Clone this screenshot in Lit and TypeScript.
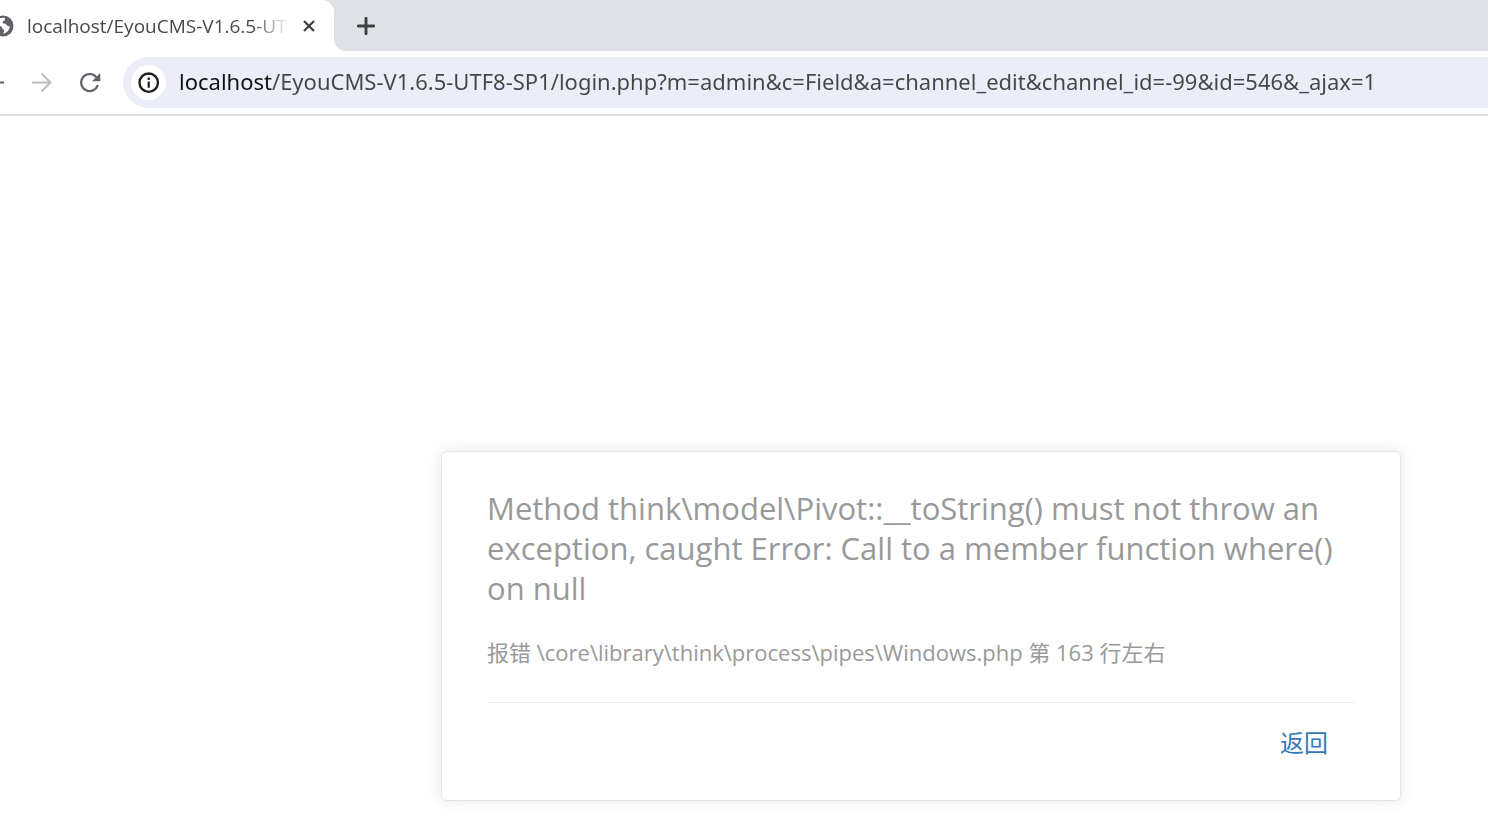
import { LitElement, html, css } from "lit";
import { customElement, property } from "lit/decorators.js";

@customElement("browser-tabs")
class BrowserTabs extends LitElement {
  @property() title = "";

  static styles = css`
    :host {
      display: flex;
      height: 51px;
      background: #dee1e6;
      font-family: "Open Sans", "Noto Sans CJK SC", sans-serif;
    }
    button {
      display: grid;
      place-items: center;
      padding: 0;
      border: 0;
      background: none;
    }
    svg {
      display: block;
    }
    .tab-bed {
      background: #fff;
      border-radius: 0 12px 0 0;
    }
    .tab {
      display: flex;
      align-items: center;
      width: 334px;
      height: 51px;
    }
    .globe {
      flex: none;
      margin-left: -8px;
    }
    .title {
      flex: none;
      width: 264px;
      margin-left: 13px;
      overflow: hidden;
      white-space: nowrap;
      font-size: 19px;
      line-height: 26px;
      color: #45494d;
      mask-image: linear-gradient(to right, #000 226px, transparent 262px);
    }
    .close {
      width: 24px;
      height: 24px;
      margin-left: 6px;
    }
    .strip {
      flex: 1;
      display: flex;
      background: linear-gradient(#dee1e6 50%, #fff 50%);
    }
    .rest {
      flex: 1;
      display: flex;
      align-items: center;
      background: #dee1e6;
      border-bottom-left-radius: 12px;
    }
    .add {
      width: 32px;
      height: 32px;
      margin-left: 16px;
    }
  `;

  render() {
    return html`
      <div class="tab-bed">
        <div class="tab">
          <svg class="globe" width="22" height="22" viewBox="0 0 22 22" aria-hidden="true">
            <circle cx="11" cy="11" r="10.5" fill="#5f6368" />
            <path
              d="M12.800 2.800C13.300 4.800 12.600 5.600 11.300 6.200c-1 .5-.4 1.400-.5 2.300 1.900-.3 3.500.2 4 1.700.4 1.100 1.800.8 3 1.300-.3 2.900-2.600 6.500-6.300 7-.3-1.300.9-2.100.6-3.200-.3-1-1.700-1-1.900-2.200-.2-1.100-1.200-1.900-2.400-2.100L3.500 10C3.500 5.500 7.500 1.800 12.800 2.800z"
              fill="#fff"
            />
          </svg>
          <span class="title">${this.title}</span>
          <button class="close" aria-label="Close tab">
            <svg width="12" height="12" viewBox="0 0 12 12">
              <path d="M1 1l10 10M11 1L1 11" stroke="#3c4043" stroke-width="2.200" />
            </svg>
          </button>
        </div>
      </div>
      <div class="strip">
        <div class="rest">
          <button class="add" aria-label="New tab">
            <svg width="18" height="18" viewBox="0 0 18 18">
              <path d="M9 1.300v15.400M1.300 9h15.400" stroke="#3c4043" stroke-width="2.900" stroke-linecap="round" />
            </svg>
          </button>
        </div>
      </div>
    `;
  }
}

@customElement("browser-toolbar")
class BrowserToolbar extends LitElement {
  @property() url = "";

  static styles = css`
    :host {
      display: flex;
      align-items: center;
      height: 63px;
      border-bottom: 2px solid #dcdcdc;
      background: #fff;
      overflow: hidden;
    }
    button {
      flex: none;
      display: grid;
      place-items: center;
      width: 32px;
      height: 32px;
      padding: 0;
      border: 0;
      background: none;
      border-radius: 50%;
    }
    svg {
      display: block;
    }
    .back {
      margin-left: -22px;
      color: #5f6368;
    }
    .forward {
      margin-left: 16px;
      color: #bdbdbd;
    }
    .reload {
      margin-left: 16px;
      color: #5f6368;
    }
    .omnibox {
      flex: 1;
      display: flex;
      align-items: center;
      height: 51px;
      margin-left: 17px;
      padding-left: 8px;
      background: #ebeef8;
      border-radius: 26px 0 0 26px;
    }
    .info {
      width: 35px;
      height: 35px;
      background: #fff;
    }
    .url {
      flex: 1;
      min-width: 0;
      height: 40px;
      margin-left: 13px;
      padding: 0 0 3px;
      border: 0;
      outline: 0;
      font: 22px "Noto Sans", "Noto Sans CJK SC", sans-serif;
      color: #454746;
      background: linear-gradient(to right, #111 93px, #454746 93px);
      background-clip: text;
      -webkit-text-fill-color: transparent;
    }
  `;

  render() {
    return html`
      <button class="back" aria-label="Back">
        <svg width="20" height="20" viewBox="0 0 20 20">
          <path d="M20 9.500H2M10 1L1.500 9.500 10 18" fill="none" stroke="currentColor" stroke-width="2" />
        </svg>
      </button>
      <button class="forward" aria-label="Forward">
        <svg width="20" height="20" viewBox="0 0 20 20">
          <path d="M0 9.500h18M9.500 .5l9 9-9 9" fill="none" stroke="currentColor" stroke-width="2" />
        </svg>
      </button>
      <button class="reload" aria-label="Reload">
        <svg width="22" height="20" viewBox="0 0 22 20">
          <path
            d="M17.300 4.200A8.500 8.500 0 1 0 18.800 12"
            fill="none"
            stroke="currentColor"
            stroke-width="2.200"
          />
          <path d="M21.300 0v8.200h-8.200z" fill="currentColor" />
        </svg>
      </button>
      <div class="omnibox">
        <button class="info" aria-label="View site information">
          <svg width="22" height="22" viewBox="0 0 22 22">
            <circle cx="10.700" cy="10.700" r="9.200" fill="none" stroke="#1f1f1f" stroke-width="2.400" />
            <path d="M10.700 9.500v6.200M10.700 5.500v2.400" stroke="#1f1f1f" stroke-width="2.200" />
          </svg>
        </button>
        <input class="url" type="text" aria-label="Address" spellcheck="false" .value=${this.url} />
      </div>
    `;
  }
}

@customElement("error-card")
class ErrorCard extends LitElement {
  @property() message = "";
  @property() location = "";

  static styles = css`
    :host {
      display: block;
      box-sizing: border-box;
      padding: 36px 45px 39px;
      border: 1px solid #e5e5e5;
      border-radius: 6px;
      background: #fff;
      box-shadow: 0 0 15px rgba(0, 0, 0, 0.1);
      font-family: "Open Sans", "Noto Sans CJK SC", sans-serif;
      color: #999;
    }
    h1 {
      margin: 0;
      font-size: 31px;
      font-weight: 400;
      line-height: 40px;
    }
    p {
      margin: 29px 0 0;
      font-size: 22px;
      line-height: 30px;
    }
    .actions {
      display: flex;
      justify-content: flex-end;
      margin-top: 35px;
      padding: 22px 27px 0 0;
      border-top: 1px solid #eee;
    }
    a {
      font-size: 24px;
      line-height: 36px;
      color: #337ab7;
      text-decoration: none;
    }
  `;

  render() {
    return html`
      <h1>${this.message}</h1>
      <p>${this.location}</p>
      <div class="actions"><a href="#">返回</a></div>
    `;
  }
}

@customElement("app-root")
class AppRoot extends LitElement {
  static styles = css`
    :host {
      display: block;
      min-height: 100vh;
      background: #fff;
      overflow: hidden;
    }
    main {
      padding: 335px 87px 19px 441px;
    }
  `;

  render() {
    return html`
      <browser-tabs title="localhost/EyouCMS-V1.6.5-UT"></browser-tabs>
      <browser-toolbar
        url="localhost/EyouCMS-V1.6.5-UTF8-SP1/login.php?m=admin&c=Field&a=channel_edit&channel_id=-99&id=546&_ajax=1"
      ></browser-toolbar>
      <main>
        <error-card
          message="Method think\\model\\Pivot::__toString() must not throw an exception, caught Error: Call to a member function where() on null"
          location="报错 \\core\\library\\think\\process\\pipes\\Windows.php 第 163 行左右"
        ></error-card>
      </main>
    `;
  }
}
